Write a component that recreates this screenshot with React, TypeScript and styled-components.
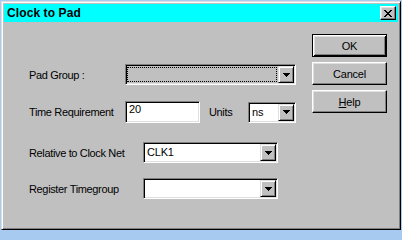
import styled, { createGlobalStyle } from 'styled-components'

const GlobalStyle = createGlobalStyle`
  html, body {
    margin: 0;
    padding: 0;
    background: #a6caf0;
    overflow: hidden;
  }
  body {
    font-family: 'Liberation Sans', Arial, sans-serif;
    font-size: 11px;
    color: #000;
  }
`

const Window = styled.div`
  box-sizing: border-box;
  width: 400px;
  height: 229px;
  margin: 1px;
  display: flex;
  flex-direction: column;
  background: #c0c0c0;
  border: 1px solid;
  border-color: #dfdfdf #000 #000 #dfdfdf;
  box-shadow: inset 1px 1px #fff, inset -1px -1px #808080;
  padding: 2px;
`

const TitleBar = styled.div`
  height: 18px;
  flex-shrink: 0;
  display: flex;
  align-items: center;
  justify-content: space-between;
  padding: 0 2px 0 3px;
  background: #00ffff;
`

const TitleText = styled.div`
  font-size: 12px;
  font-weight: 700;
  letter-spacing: 0.1px;
`

const CloseButton = styled.div`
  box-sizing: border-box;
  width: 16px;
  height: 14px;
  display: flex;
  align-items: center;
  justify-content: center;
  background: #c0c0c0;
  border: 1px solid;
  border-color: #fff #000 #000 #fff;
  box-shadow: inset -1px -1px #808080, inset 1px 1px #dfdfdf;
`

const Body = styled.div`
  flex: 1;
  display: flex;
`

const Form = styled.div`
  flex: 1;
  display: flex;
  flex-direction: column;
  padding: 42px 0 0 25px;
`

const Row = styled.div<{ $top: number }>`
  display: flex;
  align-items: center;
  margin-top: ${({ $top }) => $top}px;
`

const Label = styled.div<{ $width: number; $indent?: number }>`
  width: ${({ $width }) => $width}px;
  margin-left: ${({ $indent }) => $indent ?? 0}px;
  flex-shrink: 0;
  letter-spacing: -0.35px;
  white-space: nowrap;
`

const Field = styled.div<{ $width: number; $height?: number; $bg?: string }>`
  box-sizing: border-box;
  width: ${({ $width }) => $width}px;
  height: ${({ $height }) => $height ?? 21}px;
  display: flex;
  align-items: stretch;
  padding: 1px;
  background: ${({ $bg }) => $bg ?? '#fff'};
  border: 1px solid;
  border-color: #808080 #fff #fff #808080;
  box-shadow: inset 1px 1px #000, inset -1px -1px #dfdfdf;
`

const FieldText = styled.div<{ $align?: 'top' | 'center' }>`
  flex: 1;
  display: flex;
  align-items: ${({ $align }) => ($align === 'top' ? 'flex-start' : 'center')};
  padding: 0 2px;
  line-height: 13px;
  letter-spacing: -0.2px;
  overflow: hidden;
`

const FocusRect = styled.div`
  flex: 1;
  margin: 1px 1px 1px 0;
  border: 1px dotted #000;
`

const DropButton = styled.div`
  box-sizing: border-box;
  width: 16px;
  flex-shrink: 0;
  display: flex;
  align-items: center;
  justify-content: center;
  background: #c0c0c0;
  border: 1px solid;
  border-color: #dfdfdf #000 #000 #dfdfdf;
  box-shadow: inset 1px 1px #fff, inset -1px -1px #808080;
`

const Buttons = styled.div`
  display: flex;
  flex-direction: column;
  gap: 5px;
  padding: 12px 11px 0 0;
`

const PushButton = styled.div<{ $default?: boolean }>`
  box-sizing: border-box;
  width: 75px;
  height: 23px;
  display: flex;
  align-items: center;
  justify-content: center;
  background: #c0c0c0;
  border: 1px solid;
  border-color: ${({ $default }) => ($default ? '#000' : '#fff #000 #000 #fff')};
  box-shadow: ${({ $default }) =>
    $default
      ? 'inset 1px 1px #fff, inset -1px -1px #000, inset 2px 2px #dfdfdf, inset -2px -2px #808080'
      : 'inset -1px -1px #808080, inset 1px 1px #dfdfdf'};
  font-size: 11px;
  letter-spacing: -0.2px;
`

const Underline = styled.span`
  text-decoration: underline;
`

const CloseGlyph = () => (
  <svg width="8" height="7" viewBox="0 0 8 7" shapeRendering="crispEdges">
    <path
      fill="#000"
      d="M0 0h2v1H0zM6 0h2v1H6zM1 1h2v1H1zM5 1h2v1H5zM2 2h4v1H2zM3 3h2v1H3zM2 4h4v1H2zM1 5h2v1H1zM5 5h2v1H5zM0 6h2v1H0zM6 6h2v1H6z"
    />
  </svg>
)

const ArrowGlyph = () => (
  <svg width="7" height="4" viewBox="0 0 7 4" shapeRendering="crispEdges">
    <path fill="#000" d="M0 0h7v1H0zM1 1h5v1H1zM2 2h3v1H2zM3 3h1v1H3z" />
  </svg>
)

type ComboProps = {
  width: number
  value?: string
  focused?: boolean
  bg?: string
}

const Combo = ({ width, value, focused, bg }: ComboProps) => (
  <Field $width={width} $bg={bg}>
    {focused ? <FocusRect /> : <FieldText>{value}</FieldText>}
    <DropButton>
      <ArrowGlyph />
    </DropButton>
  </Field>
)

export default function App() {
  return (
    <>
      <GlobalStyle />
      <Window>
        <TitleBar>
          <TitleText>Clock to Pad</TitleText>
          <CloseButton>
            <CloseGlyph />
          </CloseButton>
        </TitleBar>
        <Body>
          <Form>
            <Row $top={0}>
              <Label $width={96}>Pad Group :</Label>
              <Combo width={171} focused bg="#c0c0c0" />
            </Row>
            <Row $top={16}>
              <Label $width={96}>Time Requirement</Label>
              <Field $width={75} $height={22}>
                <FieldText $align="top">20</FieldText>
              </Field>
              <Label $width={39} $indent={9}>
                Units
              </Label>
              <Combo width={48} value="ns" />
            </Row>
            <Row $top={19}>
              <Label $width={114}>Relative to Clock Net</Label>
              <Combo width={135} value="CLK1" />
            </Row>
            <Row $top={15}>
              <Label $width={114}>Register Timegroup</Label>
              <Combo width={135} />
            </Row>
          </Form>
          <Buttons>
            <PushButton $default>OK</PushButton>
            <PushButton>Cancel</PushButton>
            <PushButton>
              <Underline>H</Underline>elp
            </PushButton>
          </Buttons>
        </Body>
      </Window>
    </>
  )
}
